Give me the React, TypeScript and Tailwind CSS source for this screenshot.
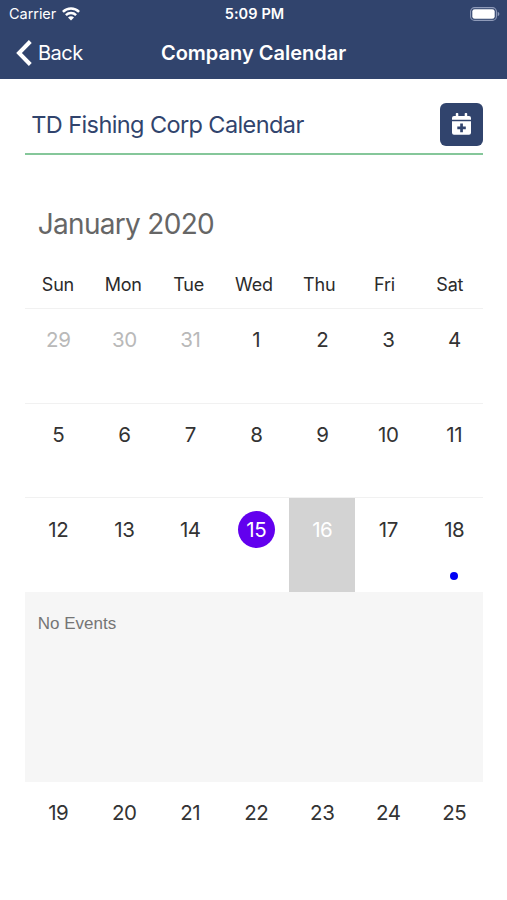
import React from 'react';

interface Day {
  date: number;
  muted?: boolean;
  today?: boolean;
  selected?: boolean;
  hasEvent?: boolean;
}

const weekdays = ['Sun', 'Mon', 'Tue', 'Wed', 'Thu', 'Fri', 'Sat'];

const weeks: Day[][] = [
  [
    { date: 29, muted: true },
    { date: 30, muted: true },
    { date: 31, muted: true },
    { date: 1 },
    { date: 2 },
    { date: 3 },
    { date: 4 }
  ],
  [{ date: 5 }, { date: 6 }, { date: 7 }, { date: 8 }, { date: 9 }, { date: 10 }, { date: 11 }],
  [
    { date: 12 },
    { date: 13 },
    { date: 14 },
    { date: 15, today: true },
    { date: 16, selected: true },
    { date: 17 },
    { date: 18, hasEvent: true }
  ]
];

const lastWeek: Day[] = [
  { date: 19 },
  { date: 20 },
  { date: 21 },
  { date: 22 },
  { date: 23 },
  { date: 24 },
  { date: 25 }
];

const WifiIcon = () => (
  <svg width="18" height="14" viewBox="0 0 18 14" fill="none" stroke="white" strokeWidth="2.5">
    <path d="M0.9 4.9C5.5 0.4 12.5 0.4 17.1 4.9" />
    <path d="M3.9 8.2C6.8 5.4 11.2 5.4 14.1 8.2" />
    <path d="M9 13.4L6 10.4C7.7 8.9 10.3 8.9 12 10.4Z" fill="white" stroke="none" />
  </svg>
);

const BatteryIcon = () => (
  <svg width="30" height="14" viewBox="0 0 30 14">
    <rect x="0.6" y="0.6" width="25.8" height="12.8" rx="4" fill="none" stroke="#8f9bb9" strokeWidth="1.1" />
    <rect x="2.3" y="2.2" width="22.4" height="9.6" rx="2.4" fill="white" />
    <path d="M27.7 4.8C29.9 5.6 29.9 8.4 27.7 9.2Z" fill="#8f9bb9" />
  </svg>
);

const CalendarPlusIcon = () => (
  <svg width="19" height="22" viewBox="0 0 19 22" fill="white">
    <path d="M0 6.7V5Q0 3 2 3H3.8V0.7Q3.8 0 4.5 0H5.6Q6.3 0 6.3 0.7V3H12.7V0.7Q12.7 0 13.4 0H14.5Q15.2 0 15.2 0.7V3H17Q19 3 19 5V6.7Z" />
    <path
      fillRule="evenodd"
      d="M0 8.2H19V19.8Q19 21.8 17 21.8H2Q0 21.8 0 19.8ZM8.2 10.6V13.5H5.3V16.3H8.2V19.2H10.9V16.3H13.8V13.5H10.9V10.6Z"
    />
  </svg>
);

const DayCell: React.FC<{ day: Day }> = ({ day }) => {
  let color = 'text-[#333]';
  if (day.muted) color = 'text-[#b9b9b9]';
  if (day.today || day.selected) color = 'text-white';

  return (
    <div className={`flex w-[66px] shrink-0 flex-col items-center pt-[12.5px] ${day.selected ? 'bg-[#d3d3d3]' : ''}`}>
      <span
        className={`flex size-[37.5px] items-center justify-center rounded-full pt-px text-[20.5px] tracking-[-0.4px] ${color} ${day.today ? 'bg-[#6200ee]' : ''}`}
      >
        {day.date}
      </span>
      {day.hasEvent && <span className="mt-6 size-2 rounded-full bg-[#0000f5]" />}
    </div>
  );
};

export default function App() {
  return (
    <div className="h-[900px] w-[507px] overflow-hidden bg-white font-['Inter',sans-serif]">
      <header className="h-[79px] bg-[#31446d] text-white">
        <div className="grid h-[27px] grid-cols-3 items-center pl-[9px] pr-[7px]">
          <div className="flex items-center gap-[6px]">
            <span className="text-[14.5px] tracking-[-0.05px]">Carrier</span>
            <WifiIcon />
          </div>
          <span className="text-center text-[14.5px] font-semibold tracking-[0.1px]">5:09 PM</span>
          <div className="flex justify-end">
            <BatteryIcon />
          </div>
        </div>
        <div className="grid h-[51px] grid-cols-[1fr_auto_1fr] items-center pl-4 pr-4">
          <button className="flex items-center gap-[6px] text-[20px] tracking-[-0.5px]">
            <svg width="16" height="26" viewBox="0 0 16 26" fill="none" stroke="white" strokeWidth="4">
              <path d="M14.3 1.5L3 13L14.3 24.5" />
            </svg>
            Back
          </button>
          <h1 className="text-[20px] font-semibold">Company Calendar</h1>
        </div>
      </header>

      <main className="pl-[25.3px] pr-[24.5px]">
        <div className="flex h-[76px] items-center justify-between border-b-2 border-[#85c79a] pl-[6px] pt-[16px]">
          <h2 className="pt-px text-[23.5px] tracking-[-0.6px] text-[#31446d]">TD Fishing Corp Calendar</h2>
          <button className="flex size-[43px] items-center justify-center rounded-[6px] bg-[#31446d]">
            <CalendarPlusIcon />
          </button>
        </div>

        <div className="flex h-[106px] items-end pb-[16px] pl-[12.5px] text-[28px] tracking-[-0.7px] text-[#666]">
          January 2020
        </div>

        <div className="grid h-[47px] grid-cols-7 items-center text-center text-[18px] tracking-[-0.2px] text-[#2b2b2b]">
          {weekdays.map((name) => (
            <span key={name}>{name}</span>
          ))}
        </div>

        {weeks.map((week, i) => (
          <div key={i} className="flex h-[94.67px] overflow-hidden border-t border-[#f1f1f1]">
            {week.map((day) => (
              <DayCell key={day.date} day={day} />
            ))}
          </div>
        ))}

        <div className="h-[190px] bg-[#f6f6f6] pl-[12.5px] pt-[19px] font-['Liberation_Sans',sans-serif] text-[17px] text-[#757575]">
          No Events
        </div>

        <div className="flex h-[94px]">
          {lastWeek.map((day) => (
            <DayCell key={day.date} day={day} />
          ))}
        </div>
      </main>
    </div>
  );
}
